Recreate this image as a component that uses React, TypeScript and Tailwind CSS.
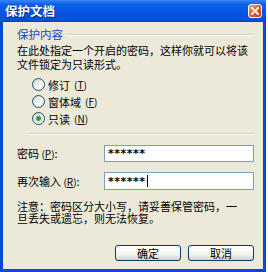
import React from "react";

const CJK = { fontFamily: '"Noto Sans CJK SC", "Noto Sans", sans-serif' };

function Radio({ label, hot, checked }: { label: string; hot: string; checked?: boolean }) {
  return (
    <div className="flex h-[17px] items-center">
      <div className="flex h-[13px] w-[13px] items-center justify-center rounded-full border border-[#1c5180] bg-[linear-gradient(135deg,#d6d5cc_0%,#f4f4f0_60%,#ffffff_100%)]">
        {checked && <div className="h-[5px] w-[5px] rounded-full bg-[#2aa22a]" />}
      </div>
      <span className="ml-[3px] text-[11px] leading-[12px] text-black">{label}</span>
      <span className="ml-[4px] text-[10px] leading-[12px] text-black">
        (<span className="underline">{hot}</span>)
      </span>
    </div>
  );
}

function Sep({ className = "" }: { className?: string }) {
  return <div className={"h-[2px] border-t border-t-[#d0d0bf] border-b border-b-white " + className} />;
}

function Btn({ children }: { children: React.ReactNode }) {
  return (
    <div className="flex h-[16px] w-[66px] items-center justify-center rounded-[3px] border border-[#003c74] bg-[linear-gradient(to_bottom,#ffffff_0%,#f3f3ef_60%,#d6d0c5_100%)] text-[11px] leading-none text-black">
      {children}
    </div>
  );
}

export default function App() {
  return (
    <div className="h-[272px] w-[268px] overflow-hidden bg-white" style={CJK}>
      <div className="flex h-[272px] w-[266px] flex-col bg-[#0848d8]">
        <div className="flex h-[22px] items-center justify-between bg-[linear-gradient(to_bottom,#3a86f4_0%,#0b60ea_20%,#0556e4_55%,#0450dc_85%,#0344c8_100%)] pl-[5px] pr-[4px]">
          <span className="text-[12.5px] font-bold leading-none text-white [text-shadow:1px_1px_0_#0a2a80]">保护文档</span>
          <div className="flex h-[14px] w-[14px] items-center justify-center rounded-[3px] border border-white bg-[linear-gradient(135deg,#f3a07f_0%,#e2572b_55%,#c23b14_100%)]">
            <svg width="8" height="8" viewBox="0 0 8 8">
              <path d="M1 1 L7 7 M7 1 L1 7" stroke="white" strokeWidth="1.8" strokeLinecap="square" />
            </svg>
          </div>
        </div>
        <div className="mx-[3px] mb-[3px] flex flex-1 flex-col bg-[#ece9d8] pl-[14px] pr-[9px] pt-[6px]">
          <div className="flex h-[13px] items-center">
            <span className="text-[11.5px] leading-none text-[#1446c8]">保护内容</span>
            <Sep className="ml-[3px] flex-1" />
          </div>
          <div className="mt-[2px] flex flex-col text-[11px] text-black">
            <div className="h-[14px] leading-[14px]">在此处指定一个开启的密码，这样你就可以将该</div>
            <div className="h-[14px] leading-[14px]">文件锁定为只读形式。</div>
          </div>
          <div className="mt-[5px] flex flex-col pl-[15px]">
            <Radio label="修订" hot="T" />
            <Radio label="窗体域" hot="F" />
            <Radio label="只读" hot="N" checked />
          </div>
          <Sep className="ml-[13px] mt-[6px]" />
          <div className="mt-[10px] flex items-center justify-between">
            <span className="text-[11px] leading-none text-black">
              密码 <span className="text-[10px]">(<span className="underline">P</span>)</span>:
            </span>
            <div className="flex h-[17px] w-[150px] items-center border border-[#7f9db9] bg-white pl-[3px] text-[11px] font-bold leading-none tracking-[0.5px] text-black" style={{ fontFamily: '"DejaVu Sans", sans-serif' }}>
              ******
            </div>
          </div>
          <div className="mt-[10px] flex items-center justify-between">
            <span className="text-[11px] leading-none text-black">
              再次输入 <span className="text-[10px]">(<span className="underline">R</span>)</span>:
            </span>
            <div className="flex h-[18px] w-[150px] items-center border border-[#7f9db9] bg-white pl-[3px] text-[11px] font-bold leading-none tracking-[0.5px] text-black" style={{ fontFamily: '"DejaVu Sans", sans-serif' }}>
              ******<span className="ml-[1px] inline-block h-[12px] w-[1px] bg-black" />
            </div>
          </div>
          <div className="mt-[10px] flex flex-col text-[11px] text-black">
            <div className="h-[12px] leading-[12px]">注意：密码区分大小写，请妥善保管密码，一</div>
            <div className="h-[12px] leading-[12px]">旦丢失或遗忘，则无法恢复。</div>
          </div>
          <div className="mt-auto mb-[8px] flex justify-end gap-[7px]">
            <Btn>确定</Btn>
            <Btn>取消</Btn>
          </div>
        </div>
      </div>
    </div>
  );
}
